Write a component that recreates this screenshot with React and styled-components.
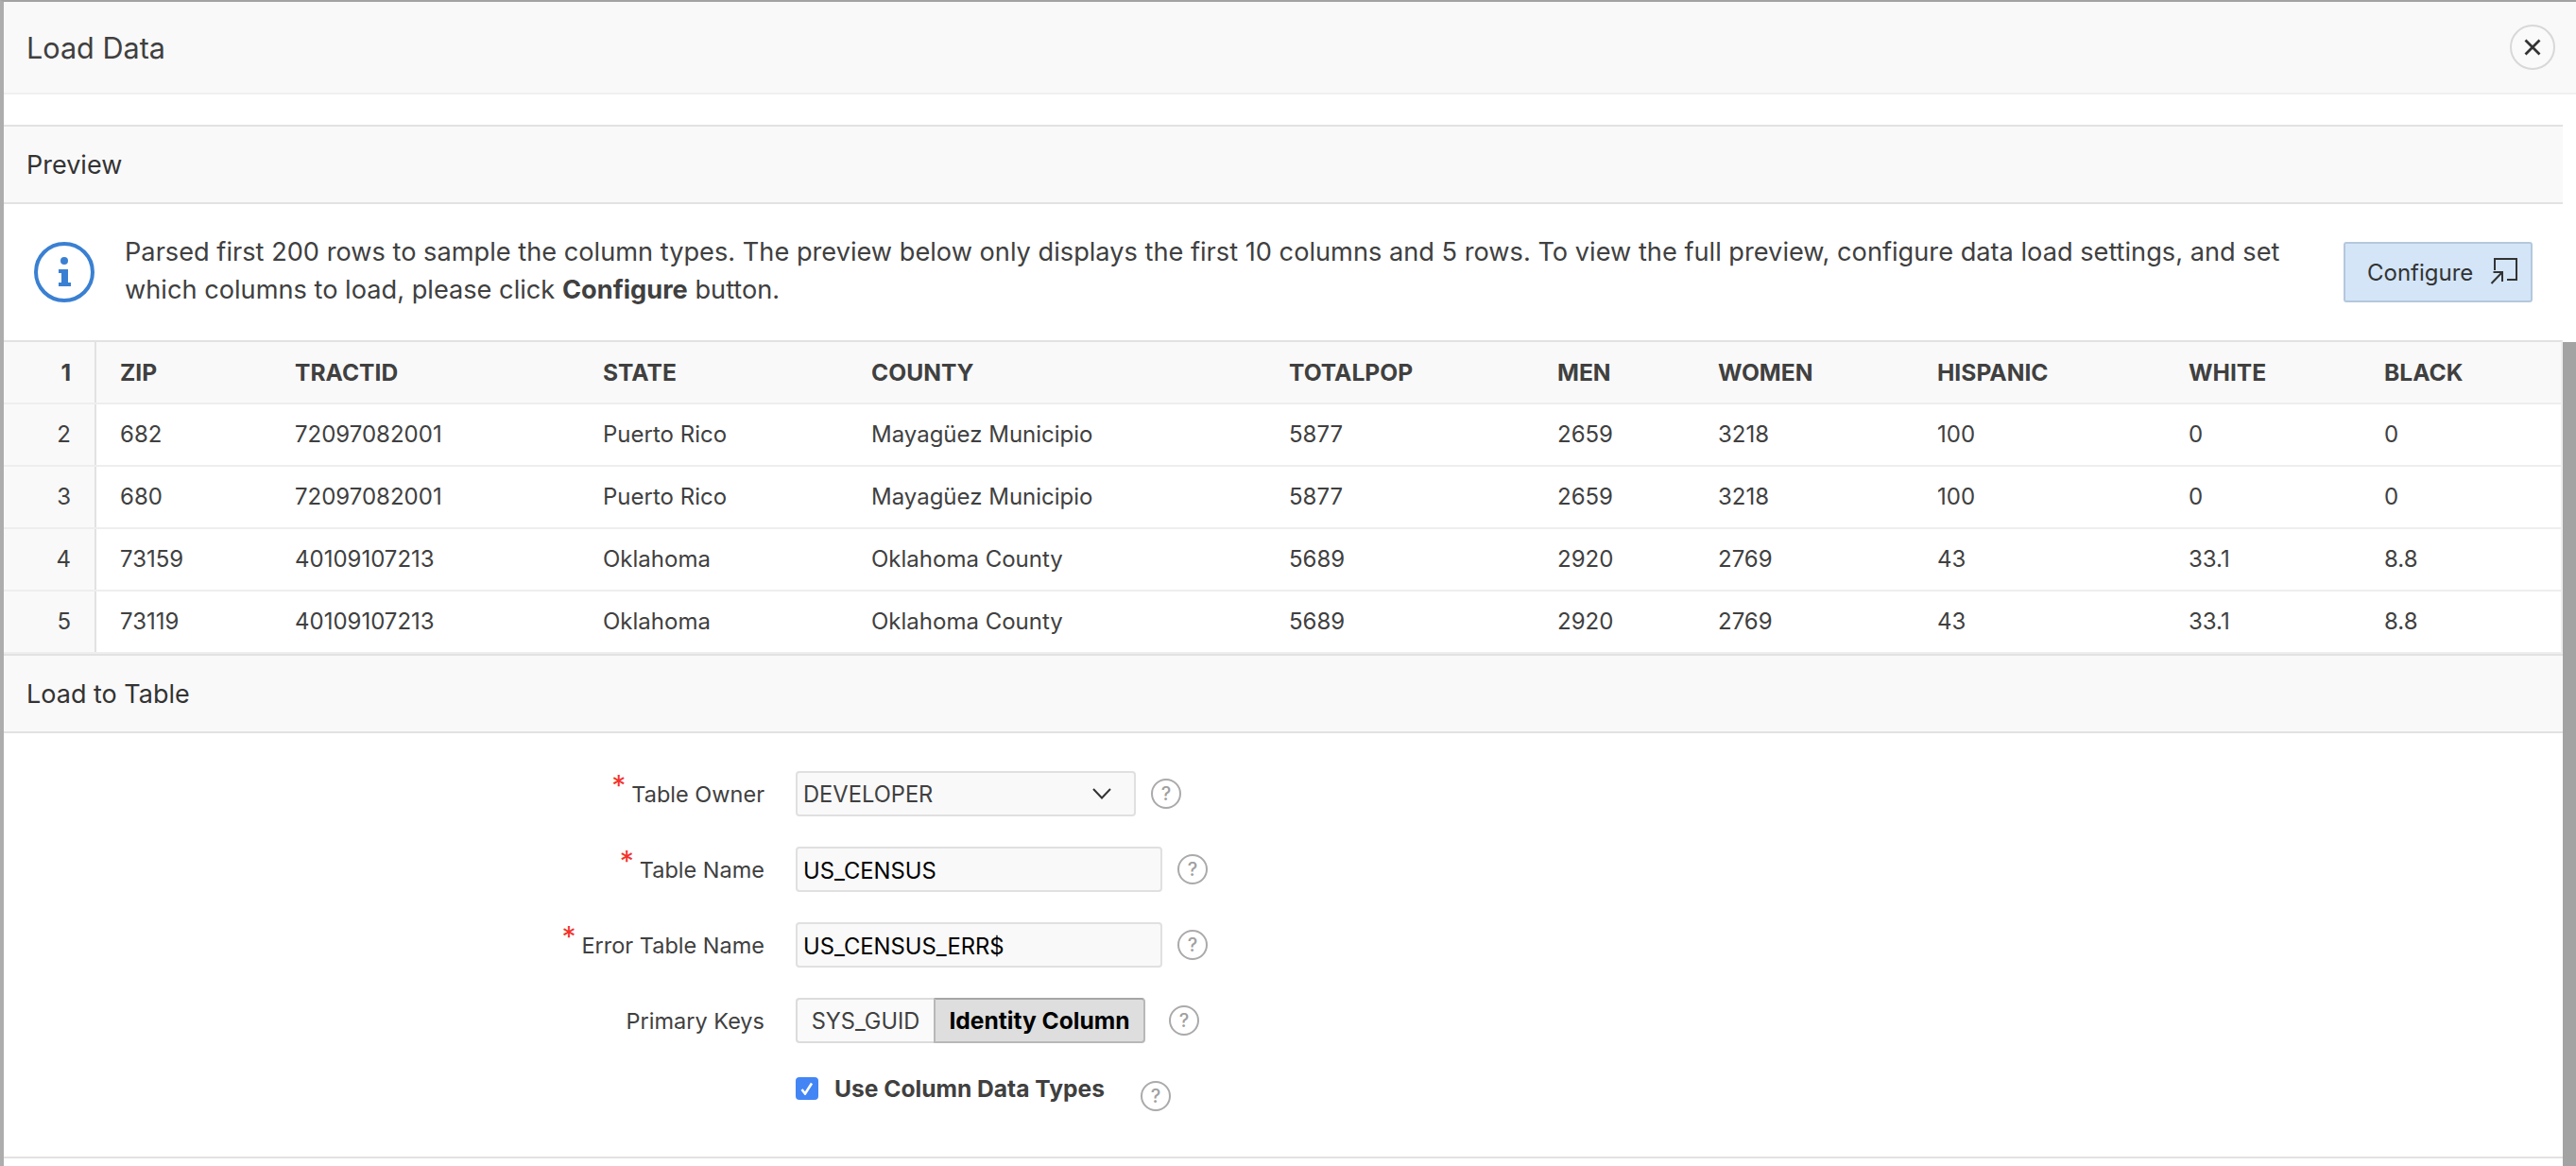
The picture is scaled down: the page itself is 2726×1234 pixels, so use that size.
import React from "react"
import styled, { createGlobalStyle } from "styled-components"

const columns = [
  "ZIP",
  "TRACTID",
  "STATE",
  "COUNTY",
  "TOTALPOP",
  "MEN",
  "WOMEN",
  "HISPANIC",
  "WHITE",
  "BLACK",
]

const rows = [
  ["682", "72097082001", "Puerto Rico", "Mayagüez Municipio", "5877", "2659", "3218", "100", "0", "0"],
  ["680", "72097082001", "Puerto Rico", "Mayagüez Municipio", "5877", "2659", "3218", "100", "0", "0"],
  ["73159", "40109107213", "Oklahoma", "Oklahoma County", "5689", "2920", "2769", "43", "33.1", "8.8"],
  ["73119", "40109107213", "Oklahoma", "Oklahoma County", "5689", "2920", "2769", "43", "33.1", "8.8"],
]

const App = () => {
  return (
    <Dialog>
      <GlobalStyle />
      <Header>
        <Title>Load Data</Title>
        <CloseButton aria-label="Close">
          <svg width="18" height="18" viewBox="0 0 18 18" fill="none" stroke="#333" strokeWidth="2.8">
            <path d="M1.5 1.5 L16.5 16.5 M16.5 1.5 L1.5 16.5" />
          </svg>
        </CloseButton>
      </Header>
      <Body>
        <Main>
          <SectionHead>Preview</SectionHead>
          <Info>
            <svg width="64" height="64" viewBox="0 0 64 64" fill="none">
              <circle cx="32" cy="32" r="30" stroke="#3a80d2" strokeWidth="4" />
              <circle cx="32" cy="20" r="4" fill="#3a80d2" />
              <path d="M26 29 H36 V43 H39 V47 H26 V43 H29 V33 H26 Z" fill="#3a80d2" />
            </svg>
            <InfoText>
              Parsed first 200 rows to sample the column types. The preview below only displays the first 10 columns and
              5 rows. To view the full preview, configure data load settings, and set which columns to load, please
              click <strong>Configure</strong> button.
            </InfoText>
            <ConfigureButton>
              Configure
              <svg width="30" height="30" viewBox="0 0 30 30" fill="none" stroke="#333" strokeWidth="2">
                <path d="M5 13 V1 H28 V23 H18" />
                <path d="M1.5 27 L13 15 M3.5 15 H13 V25" />
              </svg>
            </ConfigureButton>
          </Info>
          <Table>
            <Row $head>
              <IndexCell>1</IndexCell>
              {columns.map((c) => (
                <Cell key={c}>{c}</Cell>
              ))}
            </Row>
            {rows.map((r, i) => (
              <Row key={i}>
                <IndexCell>{i + 2}</IndexCell>
                {r.map((v, j) => (
                  <Cell key={j}>{v}</Cell>
                ))}
              </Row>
            ))}
          </Table>
          <SectionHead>Load to Table</SectionHead>
          <Form>
            <FormRow>
              <Label>
                <Star>*</Star>Table Owner
              </Label>
              <Select>
                DEVELOPER
                <svg width="20" height="12" viewBox="0 0 20 12" fill="none" stroke="#333" strokeWidth="2">
                  <path d="M1 1 L10 10.5 L19 1" />
                </svg>
              </Select>
              <Help $gap={16}>?</Help>
            </FormRow>
            <FormRow>
              <Label>
                <Star>*</Star>Table Name
              </Label>
              <Input>US_CENSUS</Input>
              <Help $gap={16}>?</Help>
            </FormRow>
            <FormRow>
              <Label>
                <Star>*</Star>Error Table Name
              </Label>
              <Input>US_CENSUS_ERR$</Input>
              <Help $gap={16}>?</Help>
            </FormRow>
            <FormRow>
              <Label>Primary Keys</Label>
              <Segmented>
                <Segment>SYS_GUID</Segment>
                <Segment $active>Identity Column</Segment>
              </Segmented>
              <Help $gap={25}>?</Help>
            </FormRow>
            <FormRow>
              <Label />
              <Checkbox>
                <svg width="14" height="14" viewBox="0 0 14 14" fill="none" stroke="#fff" strokeWidth="2.6">
                  <path d="M1.5 8 L5 12.5 L12 1.5" />
                </svg>
              </Checkbox>
              <CheckLabel>Use Column Data Types</CheckLabel>
              <Help $gap={38}>?</Help>
            </FormRow>
          </Form>
          <Footer />
        </Main>
        <ScrollThumb />
      </Body>
    </Dialog>
  )
}

export default App

const GlobalStyle = createGlobalStyle`
  html, body {
    margin: 0;
    background: #fff;
  }
  * {
    box-sizing: border-box;
  }
`

const Dialog = styled.div`
  width: 2726px;
  height: 1234px;
  display: flex;
  flex-direction: column;
  overflow: hidden;
  background: #fff;
  border-top: 2px solid #a3a3a3;
  border-left: 4px solid #adadad;
  font-family: Inter, "Liberation Sans", sans-serif;
  color: #404040;
`

const Header = styled.header`
  height: 98px;
  flex: none;
  display: flex;
  align-items: center;
  justify-content: space-between;
  padding: 0 22px 0 24px;
  background: #f9f9f9;
  border-bottom: 2px solid #f0f0f0;
`

const Title = styled.h1`
  margin: 0;
  font-size: 30.6px;
  font-weight: 400;
  color: #404040;
`

const CloseButton = styled.button`
  width: 48px;
  height: 48px;
  padding: 0;
  display: flex;
  align-items: center;
  justify-content: center;
  background: #fafafa;
  border: 2px solid #d8d8d8;
  border-radius: 50%;
`

const Body = styled.div`
  flex: 1;
  display: flex;
  min-height: 0;
`

const Main = styled.main`
  flex: 1;
  min-width: 0;
  padding-top: 32px;
`

const ScrollThumb = styled.div`
  width: 14px;
  flex: none;
  margin-top: 262px;
  background: #a3a3a3;
`

const SectionHead = styled.h2`
  height: 84px;
  margin: 0;
  display: flex;
  align-items: center;
  padding-left: 24px;
  background: #f9f9f9;
  border-top: 2px solid #e2e2e2;
  border-bottom: 2px solid #e2e2e2;
  font-size: 27px;
  font-weight: 400;
  color: #333;
`

const Info = styled.section`
  height: 144px;
  display: flex;
  align-items: center;
  padding: 0 32px 0 32px;
`

const InfoText = styled.p`
  width: 2300px;
  margin: -2px 0 0 32px;
  font-size: 27.2px;
  line-height: 40px;
  color: #404040;

  strong {
    font-weight: 700;
  }
`

const ConfigureButton = styled.button`
  width: 200px;
  height: 64px;
  margin-left: auto;
  display: flex;
  align-items: center;
  gap: 18px;
  padding: 0 0 0 23px;
  background: #d3e5f7;
  border: 2px solid #b4c8dc;
  border-radius: 3px;
  font-family: inherit;
  font-size: 24px;
  color: #333;
`

const Table = styled.div`
  border-top: 2px solid #e2e2e2;
  border-right: 2px solid #eee;
`

const Row = styled.div`
  height: 66px;
  display: grid;
  grid-template-columns: 98px 185px 326px 284px 442px 284px 170px 232px 266px 207px 1fr;
  align-items: stretch;
  border-bottom: 2px solid #eee;
  background: ${(p) => (p.$head ? "#f9f9f9" : "#fff")};
  font-weight: ${(p) => (p.$head ? 700 : 400)};
  font-size: ${(p) => (p.$head ? "24.6px" : "24px")};
  color: #404040;

  > div {
    padding-bottom: ${(p) => (p.$head ? 0 : "2px")};
  }
`

const Cell = styled.div`
  display: flex;
  align-items: center;
  padding-left: 25px;
  white-space: nowrap;
`

const IndexCell = styled.div`
  display: flex;
  align-items: center;
  justify-content: flex-end;
  padding-right: 25px;
  background: #f9f9f9;
  border-right: 2px solid #e2e2e2;
`

const Form = styled.section`
  height: 448px;
  display: flex;
  flex-direction: column;
  gap: 32px;
  padding-top: 40px;
`

const FormRow = styled.div`
  height: 48px;
  display: flex;
  align-items: center;
`

const Label = styled.label`
  width: 805px;
  height: 48px;
  flex: none;
  display: flex;
  align-items: center;
  justify-content: flex-end;
  margin-right: 33px;
  font-size: 23.5px;
  color: #404040;
`

const Star = styled.span`
  align-self: flex-start;
  margin: 0 6px 0 0;
  font-size: 30px;
  line-height: 30px;
  color: #f4322a;
`

const Select = styled.div`
  width: 360px;
  height: 48px;
  display: flex;
  align-items: center;
  justify-content: space-between;
  padding: 0 24px 0 6px;
  background: #f9f9f9;
  border: 2px solid #e0e0e0;
  border-radius: 4px;
  font-size: 23.7px;
  color: #404040;
`

const Input = styled.div`
  width: 388px;
  height: 48px;
  display: flex;
  align-items: center;
  padding: 2px 0 0 6px;
  background: #f9f9f9;
  border: 2px solid #e0e0e0;
  border-radius: 4px;
  font-size: 23.8px;
  color: #000;
`

const Help = styled.span`
  width: 32px;
  height: 32px;
  flex: none;
  display: flex;
  align-items: center;
  justify-content: center;
  margin-left: ${(p) => p.$gap}px;
  border: 2px solid #aaa;
  border-radius: 50%;
  font-size: 20px;
  font-weight: 500;
  color: #a0a0a0;
`

const Segmented = styled.div`
  width: 370px;
  height: 48px;
  display: flex;
`

const Segment = styled.div`
  height: 48px;
  flex: ${(p) => (p.$active ? 1 : "none")};
  width: ${(p) => (p.$active ? "auto" : "146px")};
  display: flex;
  align-items: center;
  justify-content: center;
  background: ${(p) => (p.$active ? "#dedede" : "#fafafa")};
  border: 2px solid ${(p) => (p.$active ? "#b8b8b8" : "#dcdcdc")};
  border-top-color: ${(p) => (p.$active ? "#a6a6a6" : "#dcdcdc")};
  border-right-width: ${(p) => (p.$active ? "2px" : "0")};
  border-radius: ${(p) => (p.$active ? "0 4px 4px 0" : "4px 0 0 4px")};
  font-size: ${(p) => (p.$active ? "24.6px" : "23.6px")};
  font-weight: ${(p) => (p.$active ? 700 : 400)};
  color: ${(p) => (p.$active ? "#000" : "#404040")};
`

const Checkbox = styled.span`
  width: 24px;
  height: 24px;
  flex: none;
  display: flex;
  align-items: center;
  justify-content: center;
  margin-bottom: 16px;
  background: #4385f5;
  border-radius: 4px;
`

const CheckLabel = styled.span`
  margin: 0 0 16px 17px;
  font-size: 24.6px;
  font-weight: 700;
  color: #404040;
`

const Footer = styled.div`
  height: 2px;
  background: #e2e2e2;
`
